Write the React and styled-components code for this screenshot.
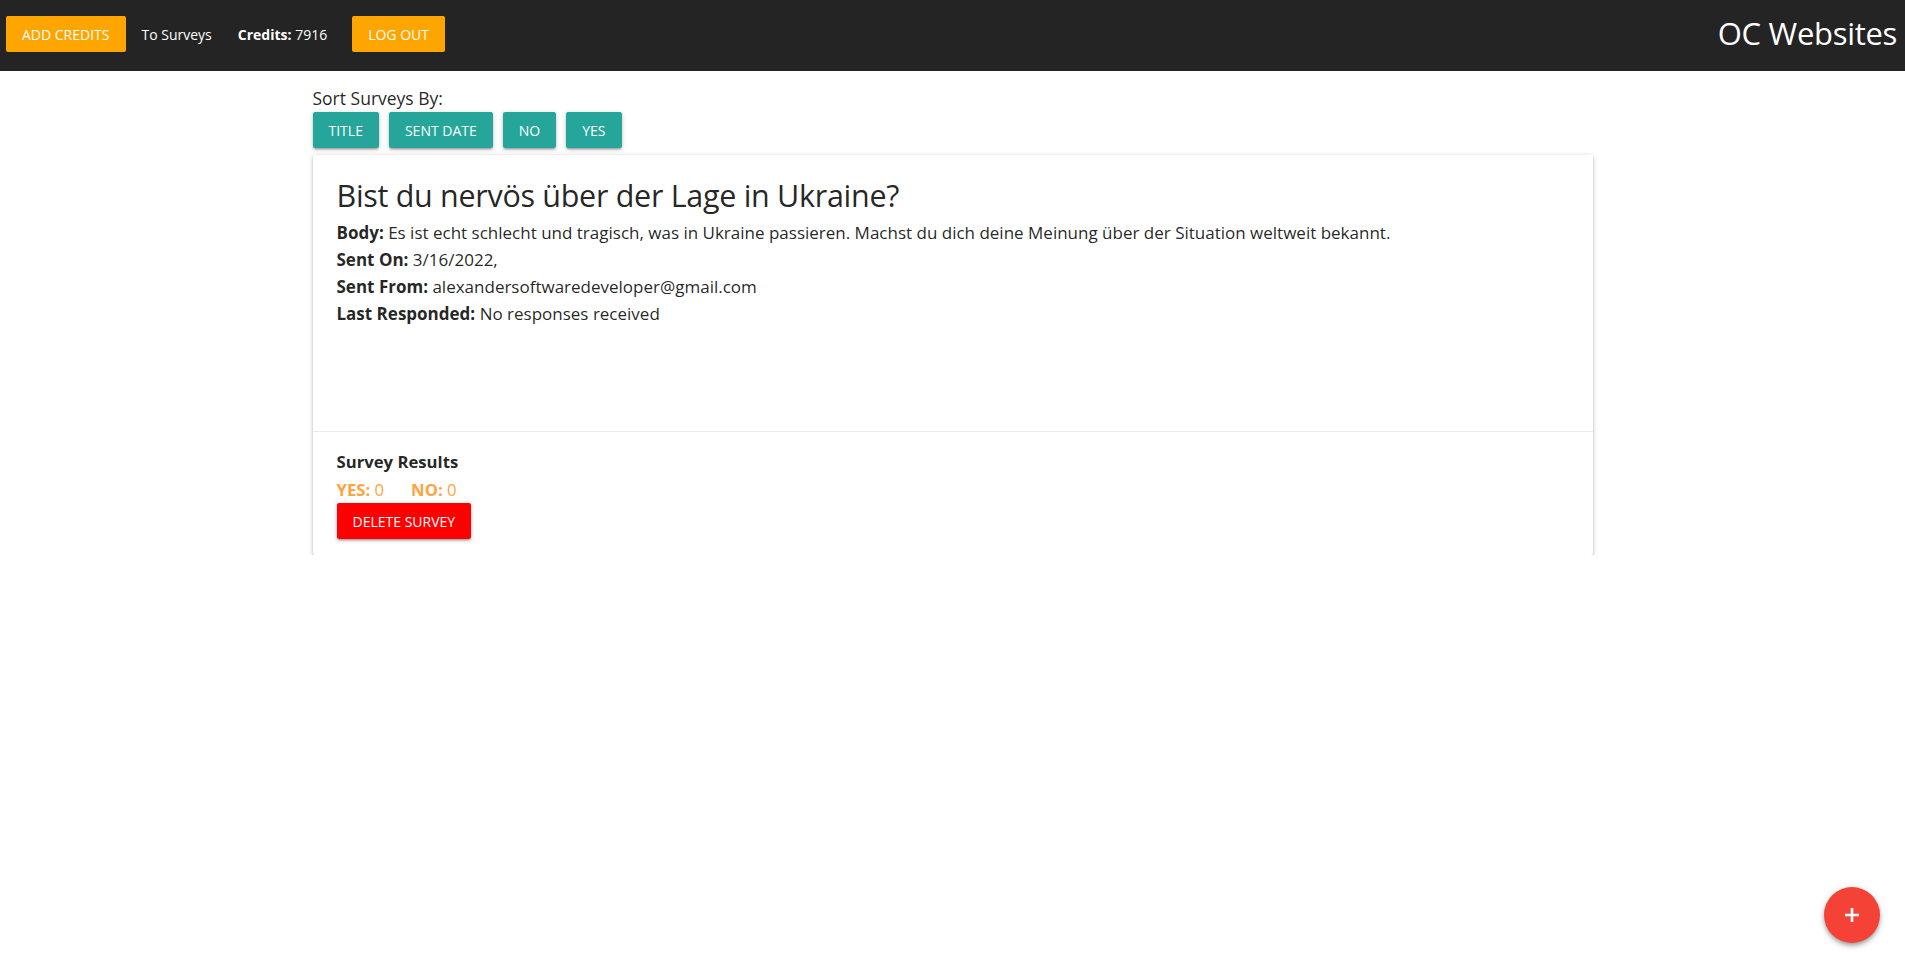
import React from 'react'
import styled, { createGlobalStyle } from 'styled-components'

const GlobalStyle = createGlobalStyle`
  html, body {
    margin: 0;
    padding: 0;
    background: #fff;
    font-family: "Open Sans", "Noto Sans", sans-serif;
    color: rgba(0, 0, 0, 0.87);
  }
`

const shadow = `
  box-shadow: 0 2px 2px 0 rgba(0, 0, 0, 0.14), 0 3px 1px -2px rgba(0, 0, 0, 0.12),
    0 1px 5px 0 rgba(0, 0, 0, 0.2);
`

const Nav = styled.nav`
  height: 71px;
  box-sizing: border-box;
  background: #242424;
  display: flex;
  align-items: center;
  justify-content: space-between;
  padding: 0 8px 3px 6px;
  color: #fff;
`

const NavLeft = styled.ul`
  display: flex;
  align-items: center;
  list-style: none;
  margin: 0;
  padding: 0;
  height: 100%;
`

const NavItem = styled.li`
  margin-right: ${(p) => p.gap || 0}px;
  font-size: 14px;
  white-space: nowrap;
  b {
    font-weight: 700;
  }
`

const Btn = styled.button`
  height: 36px;
  padding: 0 16px;
  border: none;
  border-radius: 2px;
  background: ${(p) => p.bg || '#26a69a'};
  color: #fff;
  font-family: inherit;
  font-size: 14px;
  text-transform: uppercase;
  letter-spacing: 0;
  cursor: pointer;
  ${(p) => (p.raised ? shadow : '')}
`

const Brand = styled.div`
  font-size: 31px;
  letter-spacing: -0.3px;
  line-height: 1;
  padding-bottom: 2px;
`

const Container = styled.main`
  width: 1280px;
  margin: 0 auto;
  padding-top: 14px;
`

const SortLabel = styled.div`
  font-size: 17.5px;
  line-height: 27px;
`

const SortRow = styled.div`
  display: flex;
  gap: 10px;
  margin-bottom: 7px;
`

const Card = styled.div`
  background: #fff;
  border-radius: 2px;
  box-shadow: 0 2px 2px 0 rgba(0, 0, 0, 0.16), 0 3px 1px -2px rgba(0, 0, 0, 0.14),
    0 1px 5px 0 rgba(0, 0, 0, 0.22);
`

const CardContent = styled.div`
  height: 276px;
  box-sizing: border-box;
  padding: 24px;
`

const CardTitle = styled.div`
  font-size: 30.5px;
  font-weight: 400;
  line-height: 32px;
  margin-bottom: 8px;
  letter-spacing: -0.3px;
`

const Line = styled.p`
  margin: 0;
  font-size: 17px;
  line-height: 27px;
`

const CardAction = styled.div`
  border-top: 1px solid rgba(160, 160, 160, 0.2);
  padding: 16px 24px;
`

const ResultsTitle = styled.div`
  font-size: 16.7px;
  font-weight: 700;
  line-height: 28px;
`

const Counts = styled.div`
  display: flex;
  gap: 27px;
  font-size: 16.7px;
  line-height: 27px;
  color: #ffa43c;
`

const Fab = styled.button`
  position: fixed;
  right: 25px;
  bottom: 24px;
  width: 56px;
  height: 56px;
  border-radius: 50%;
  border: none;
  background: #f44336;
  display: flex;
  align-items: center;
  justify-content: center;
  cursor: pointer;
  box-shadow: 0 4px 5px 0 rgba(0, 0, 0, 0.14), 0 1px 10px 0 rgba(0, 0, 0, 0.12),
    0 2px 4px -1px rgba(0, 0, 0, 0.3);
`

const survey = {
  title: 'Bist du nervös über der Lage in Ukraine?',
  body: 'Es ist echt schlecht und tragisch, was in Ukraine passieren. Machst du dich deine Meinung über der Situation weltweit bekannt.',
  sentOn: '3/16/2022,',
  sentFrom: 'alexandersoftwaredeveloper@gmail.com',
  lastResponded: 'No responses received',
  yes: 0,
  no: 0,
}

const App = () => {
  return (
    <>
      <GlobalStyle />
      <Nav>
        <NavLeft>
          <NavItem gap={16}>
            <Btn bg="#ffa500">Add Credits</Btn>
          </NavItem>
          <NavItem gap={26}>To Surveys</NavItem>
          <NavItem gap={25}>
            <b>Credits:</b> 7916
          </NavItem>
          <NavItem>
            <Btn bg="#ffa500">Log Out</Btn>
          </NavItem>
        </NavLeft>
        <Brand>OC Websites</Brand>
      </Nav>

      <Container>
        <SortLabel>Sort Surveys By:</SortLabel>
        <SortRow>
          <Btn raised>Title</Btn>
          <Btn raised>Sent Date</Btn>
          <Btn raised>No</Btn>
          <Btn raised>Yes</Btn>
        </SortRow>

        <Card>
          <CardContent>
            <CardTitle>{survey.title}</CardTitle>
            <Line>
              <b>Body:</b> {survey.body}
            </Line>
            <Line>
              <b>Sent On:</b> {survey.sentOn}
            </Line>
            <Line>
              <b>Sent From:</b> {survey.sentFrom}
            </Line>
            <Line>
              <b>Last Responded:</b> {survey.lastResponded}
            </Line>
          </CardContent>
          <CardAction>
            <ResultsTitle>Survey Results</ResultsTitle>
            <Counts>
              <span>
                <b>YES:</b> {survey.yes}
              </span>
              <span>
                <b>NO:</b> {survey.no}
              </span>
            </Counts>
            <Btn bg="#ff0000" raised>
              Delete Survey
            </Btn>
          </CardAction>
        </Card>
      </Container>

      <Fab aria-label="add">
        <svg width="18" height="18" viewBox="0 0 18 18">
          <path d="M9 2v14M2 9h14" stroke="#fff" strokeWidth="2.6" />
        </svg>
      </Fab>
    </>
  )
}

export default App
